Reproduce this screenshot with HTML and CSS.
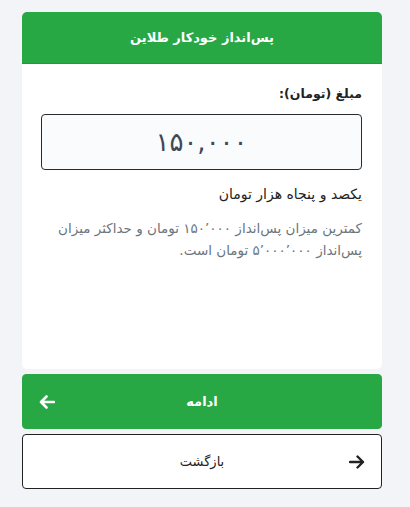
FILE: index.html
```html
<!DOCTYPE html>
<html lang="fa" dir="rtl">
<head>
<meta charset="utf-8">
<link rel="stylesheet" href="styles.css">
</head>
<body>
<div class="page">
  <div class="card">
    <div class="card-header">پس‌انداز خودکار طلاین</div>
    <div class="card-body">
      <label class="label">مبلغ (تومان):</label>
      <div class="input">۱۵۰,۰۰۰</div>
      <div class="words">یکصد و پنجاه هزار تومان</div>
      <p class="hint">کمترین میزان پس‌انداز ۱۵۰٬۰۰۰ تومان و حداکثر میزان پس‌انداز ۵٬۰۰۰٬۰۰۰ تومان است.</p>
    </div>
  </div>
  <button class="btn btn-primary">
    <span class="btn-text">ادامه</span>
    <svg class="icon icon-left" viewBox="0 0 16 14" width="16" height="14"><path d="M15 7H2M7.5 1.5L2 7l5.5 5.5" fill="none" stroke="#fff" stroke-width="2.6" stroke-linecap="round" stroke-linejoin="round"/></svg>
  </button>
  <button class="btn btn-outline">
    <svg class="icon icon-right" viewBox="0 0 16 14" width="16" height="14"><path d="M1 7h13M8.5 1.5L14 7l-5.5 5.5" fill="none" stroke="#222" stroke-width="2.4" stroke-linecap="round" stroke-linejoin="round"/></svg>
    <span class="btn-text">بازگشت</span>
  </button>
</div>
</body>
</html>
```
FILE: styles.css
```css
* { box-sizing: border-box; }
html, body { margin: 0; padding: 0; }
body {
  background: #f3f4f8;
  font-family: "DejaVu Sans", "Noto Sans", sans-serif;
  width: 410px;
  height: 507px;
  overflow: hidden;
}
.page {
  padding: 12px 28px 0 22px;
  display: flex;
  flex-direction: column;
}
.card {
  background: #fff;
  border-radius: 5px;
  height: 357px;
  overflow: hidden;
  display: flex;
  flex-direction: column;
}
.card-header {
  background: #28a745;
  color: #fff;
  height: 52px;
  display: flex;
  align-items: center;
  justify-content: center;
  font-weight: bold;
  font-size: 13px;
  border-bottom: 1px solid #24963e;
}
.card-body {
  padding: 20px 20px 0 19px;
  display: flex;
  flex-direction: column;
}
.label {
  font-weight: bold;
  font-size: 12.5px;
  color: #222;
  line-height: 20px;
  margin-bottom: 10px;
}
.input {
  height: 56px;
  border: 1px solid #2a2a2a;
  border-radius: 4px;
  background: #fafbfc;
  color: #3e4856;
  font-size: 26px;
  display: flex;
  align-items: center;
  justify-content: center;
  direction: ltr;
  letter-spacing: 1px;
}
.words {
  margin-top: 14px;
  font-size: 14px;
  color: #222;
  line-height: 20px;
}
.hint {
  margin: 13px 0 0;
  font-size: 13.5px;
  color: #6c757d;
  line-height: 22px;
}
.btn {
  position: relative;
  height: 55px;
  width: 360px;
  border-radius: 4px;
  font-family: inherit;
  font-size: 13px;
  display: flex;
  align-items: center;
  justify-content: center;
  padding: 0;
  cursor: pointer;
}
.btn-primary {
  margin-top: 5px;
  background: #28a745;
  border: 1px solid #28a745;
  color: #fff;
  font-weight: bold;
}
.btn-outline {
  margin-top: 5px;
  height: 55px;
  background: #fff;
  border: 1px solid #222;
  color: #222;
}
.icon {
  position: absolute;
  top: 50%;
  margin-top: -7px;
}
.icon-left { left: 16px; }
.icon-right { right: 16px; }
```
